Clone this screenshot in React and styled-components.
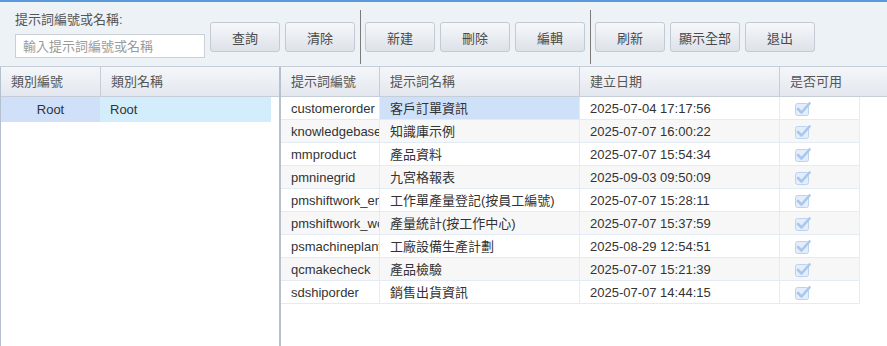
import React from 'react'
import styled, { createGlobalStyle } from 'styled-components'

const GlobalStyle = createGlobalStyle`
  html, body {
    margin: 0;
    padding: 0;
    background: #ffffff;
  }
  body {
    font-family: "Liberation Sans", Arial, "Noto Sans CJK TC", sans-serif;
    font-size: 13px;
    color: #333;
  }
`

const rows = [
  { code: 'customerorder', name: '客戶訂單資訊', date: '2025-07-04 17:17:56', selected: true },
  { code: 'knowledgebase', name: '知識庫示例', date: '2025-07-07 16:00:22' },
  { code: 'mmproduct', name: '產品資料', date: '2025-07-07 15:54:34' },
  { code: 'pmninegrid', name: '九宮格報表', date: '2025-09-03 09:50:09' },
  { code: 'pmshiftwork_emp', name: '工作單產量登記(按員工編號)', date: '2025-07-07 15:28:11' },
  { code: 'pmshiftwork_wc', name: '產量統計(按工作中心)', date: '2025-07-07 15:37:59' },
  { code: 'psmachineplanyear', name: '工廠設備生產計劃', date: '2025-08-29 12:54:51' },
  { code: 'qcmakecheck', name: '產品檢驗', date: '2025-07-07 15:21:39' },
  { code: 'sdshiporder', name: '銷售出貨資訊', date: '2025-07-07 14:44:15' },
]

const Page = styled.div`
  display: flex;
  flex-direction: column;
  height: 346px;
  border-top: 2px solid #5a9ad8;
  box-sizing: border-box;
  overflow: hidden;
`

const Toolbar = styled.div`
  display: flex;
  align-items: flex-start;
  gap: 5px;
  height: 64px;
  padding-left: 15px;
  background: #edf2f7;
  flex: none;
`

const SearchGroup = styled.div`
  display: flex;
  flex-direction: column;
  gap: 6px;
  width: 190px;
  margin-top: 10px;
`

const Label = styled.label`
  line-height: 16px;
  color: #555;
`

const SearchInput = styled.input`
  box-sizing: border-box;
  height: 24px;
  width: 190px;
  border: 1px solid #c9d0d8;
  background: #fff;
  padding: 0 7px;
  font: inherit;
  color: #333;
  outline: none;

  &::placeholder {
    color: #9a9a9a;
  }
`

const Button = styled.button`
  box-sizing: border-box;
  width: 70px;
  height: 30px;
  margin-top: 20px;
  border: 1px solid #c3cad3;
  border-radius: 3px;
  background: linear-gradient(to bottom, #f6f8fa, #dde2e9);
  color: #4a4a4a;
  font: inherit;
  padding: 0;
  cursor: pointer;
`

const Divider = styled.div`
  width: 1px;
  height: 54px;
  margin-top: 8px;
  margin-right: -1px;
  background: #7b7b7b;
`

const Main = styled.div`
  display: flex;
  flex: 1;
  min-height: 0;
  border-top: 1px solid #c5cdd8;
`

const LeftPanel = styled.div`
  width: 278px;
  flex: none;
  border-left: 1px solid #b4bfcf;
  background: #fff;
`

const Splitter = styled.div`
  width: 2px;
  flex: none;
  background: #b6c0ce;
`

const RightPanel = styled.div`
  flex: 1;
  background: #fff;
  min-width: 0;
`

const HeaderRow = styled.div`
  display: flex;
  height: 29px;
  border-bottom: 1px solid #c5cdd8;
  background: linear-gradient(to bottom, #f4f6f9, #e3e8ee);
`

const HeaderCell = styled.div`
  box-sizing: border-box;
  width: ${p => p.$w ? `${p.$w}px` : 'auto'};
  flex: ${p => p.$w ? 'none' : '1'};
  padding-left: 10px;
  line-height: 29px;
  color: #555;
  border-right: ${p => p.$last ? 'none' : '1px solid #c5cdd8'};
  white-space: nowrap;
`

const TreeRow = styled.div`
  display: flex;
  width: 270px;
  height: 25px;
`

const TreeCell = styled.div`
  box-sizing: border-box;
  width: ${p => p.$w}px;
  line-height: 26px;
  background: ${p => p.$bg};
  text-align: ${p => p.$center ? 'center' : 'left'};
  padding-left: ${p => p.$center ? '0' : '10px'};
  color: #333;
`

const Grid = styled.div`
  width: 579px;
`

const GridRow = styled.div`
  display: flex;
  height: 23px;
  border-bottom: 1px solid #e3ebf4;
  box-sizing: border-box;
  background: ${p => p.$alt ? '#f7f7f7' : '#ffffff'};
`

const GridCell = styled.div`
  box-sizing: border-box;
  width: ${p => p.$w}px;
  flex: none;
  padding-left: 10px;
  line-height: 24px;
  overflow: hidden;
  white-space: nowrap;
  border-right: 1px solid #e3ebf4;
  background: ${p => p.$selected ? '#cfe0f9' : 'transparent'};
  color: #333;
`

const CheckCell = styled(GridCell)`
  padding-left: 15px;
  display: flex;
  align-items: center;
`

const CheckIcon = () => (
  <svg width="16" height="15" viewBox="0 0 16 15">
    <rect x="0.5" y="2.5" width="13" height="12" rx="2" fill="#e4eefb" stroke="#bcd3f0" />
    <path d="M3 8 L6.5 11.5 L14.5 2.5" fill="none" stroke="#a9c7ee" strokeWidth="2.6" strokeLinecap="round" strokeLinejoin="round" />
  </svg>
)

export default function App() {
  return (
    <>
      <GlobalStyle />
      <Page>
        <Toolbar>
          <SearchGroup>
            <Label>提示詞編號或名稱:</Label>
            <SearchInput placeholder="輸入提示詞編號或名稱" />
          </SearchGroup>
          <Button>查詢</Button>
          <Button>清除</Button>
          <Divider />
          <Button>新建</Button>
          <Button>刪除</Button>
          <Button>編輯</Button>
          <Divider />
          <Button>刷新</Button>
          <Button>顯示全部</Button>
          <Button>退出</Button>
        </Toolbar>
        <Main>
          <LeftPanel>
            <HeaderRow>
              <HeaderCell $w={100}>類別編號</HeaderCell>
              <HeaderCell $last>類別名稱</HeaderCell>
            </HeaderRow>
            <TreeRow>
              <TreeCell $w={99} $bg="#d0e0f9" $center>Root</TreeCell>
              <TreeCell $w={171} $bg="#d4edfc">Root</TreeCell>
            </TreeRow>
          </LeftPanel>
          <Splitter />
          <RightPanel>
            <HeaderRow>
              <HeaderCell $w={99}>提示詞編號</HeaderCell>
              <HeaderCell $w={200}>提示詞名稱</HeaderCell>
              <HeaderCell $w={200}>建立日期</HeaderCell>
              <HeaderCell $last>是否可用</HeaderCell>
            </HeaderRow>
            <Grid>
              {rows.map((r, i) => (
                <GridRow key={r.code} $alt={i % 2 === 1}>
                  <GridCell $w={99}>{r.code}</GridCell>
                  <GridCell $w={200} $selected={r.selected}>{r.name}</GridCell>
                  <GridCell $w={200}>{r.date}</GridCell>
                  <CheckCell $w={80}>
                    <CheckIcon />
                  </CheckCell>
                </GridRow>
              ))}
            </Grid>
          </RightPanel>
        </Main>
      </Page>
    </>
  )
}
